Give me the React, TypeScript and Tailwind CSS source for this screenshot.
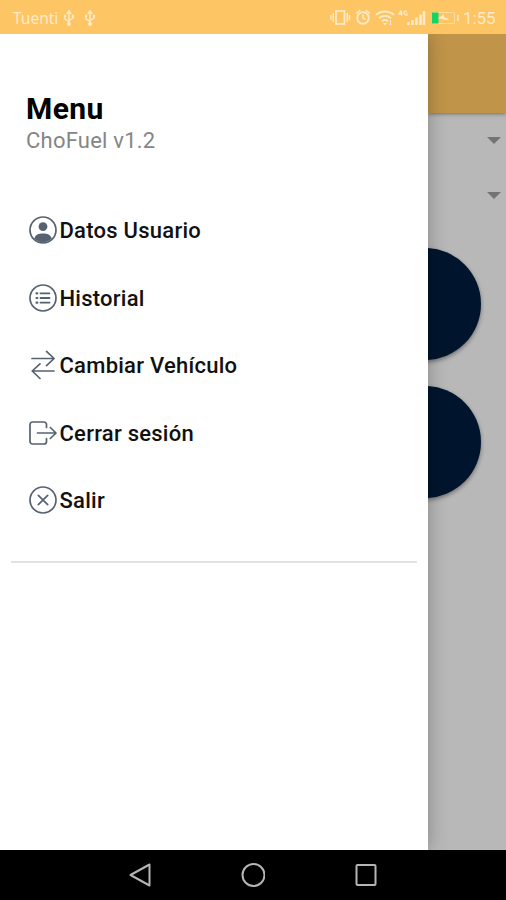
import type { ReactNode } from 'react'

const menuItems: { label: string; icon: ReactNode }[] = [
  {
    label: 'Datos Usuario',
    icon: (
      <>
        <circle cx="14" cy="14" r="13" />
        <circle cx="14" cy="10.6" r="4.4" fill="currentColor" stroke="none" />
        <path d="M5.3 22.6c1.2-3.9 4.2-5 8.7-5s7.5 1.1 8.7 5A12.3 12.3 0 0 1 5.3 22.6Z" fill="currentColor" stroke="none" />
      </>
    ),
  },
  {
    label: 'Historial',
    icon: (
      <>
        <circle cx="14" cy="14" r="13" />
        <path d="M11.5 9.3h9M11.5 14h9M11.5 18.7h9" strokeWidth="1.8" />
        <path d="M7.5 9.3h.8M7.5 14h.8M7.5 18.7h.8" strokeWidth="2.2" />
      </>
    ),
  },
  {
    label: 'Cambiar Vehículo',
    icon: <path d="M3 7.5h21.8M17.5.3l7.6 7.2-7.6 7.2M25 20H3.200M11 12.800 3.200 20l7.800 7.500" />,
  },
  {
    label: 'Cerrar sesión',
    icon: (
      <path d="M17.500 8.500v-3A2.500 2.500 0 0 0 15 3H3.500A2.500 2.500 0 0 0 1 5.500v17A2.500 2.500 0 0 0 3.500 25H15a2.500 2.500 0 0 0 2.500-2.500v-3M8.500 14H27M21.300 8.500 27 14l-5.700 5.500" />
    ),
  },
  {
    label: 'Salir',
    icon: (
      <>
        <circle cx="14" cy="14" r="13" />
        <path d="m9.300 9.300 9.400 9.400M18.700 9.300l-9.400 9.400" />
      </>
    ),
  },
]

function UsbIcon() {
  return (
    <svg viewBox="0 0 12 16" fill="none" stroke="currentColor" strokeWidth="1.4" className="h-4 w-3">
      <path d="M6 14V2M6 11.5 2 9V6M6 10.5 10 8V5.5" />
      <path d="M4.300 3.300 6 .6l1.700 2.700Z" fill="currentColor" />
      <circle cx="6" cy="14" r="1.200" fill="currentColor" />
      <path d="M1 5.800h2.200M8.800 5.800H11" strokeWidth="2.200" />
    </svg>
  )
}

function StatusBar() {
  return (
    <header className="flex h-[34px] items-center bg-[#fdc563] pl-[13px] pr-[10px] pt-0.5 text-[#ffeaca]">
      <span className="w-[50px] font-['Noto_Sans',sans-serif] text-[15.5px] leading-5">Tuenti</span>
      <UsbIcon />
      <span className="w-[9px]" />
      <UsbIcon />
      <div className="ml-auto flex items-center">
        <svg viewBox="0 0 130 20" fill="none" stroke="currentColor" className="h-5 w-[130px]">
          {/* vibrate */}
          <rect x="6" y="3" width="8.5" height="13" strokeWidth="1.7" />
          <path d="M3.300 5v9M17.300 5v9M1 7v5M19.500 7v5" strokeWidth="1.500" />
          {/* alarm */}
          <circle cx="33" cy="10" r="5.800" strokeWidth="1.900" />
          <path d="M33 6.500V10l2.500 1.500M26.300 5.500l4-3.500M39.700 5.500l-4-3.500" strokeWidth="1.500" />
          {/* wifi */}
          <path d="M46 6.800c5.400-4.400 12.600-4.400 18 0M49 10.200c3.600-3 8.400-3 12 0M52 13.200c2-1.500 4-1.500 6 0" strokeWidth="1.900" />
          <path d="M53 15h4l-2 2.500Z" fill="currentColor" stroke="none" />
          <path d="M60.500 12v5M59 15.500l1.500 1.500 1.500-1.500" strokeWidth="1" />
          {/* mobile network and signal */}
          <path d="M71 2.500 69 6h3.500M71.500 3v4.500M77 3.500c-3-2-4 3.500-1 3.500h1V5" strokeWidth="1.300" />
          <path d="M78.500 17v-3M82.500 17v-5M86.500 17V9.500M90.500 17V6.500M94 17V3" strokeWidth="2.600" />
          {/* battery */}
          <rect x="102.500" y="4.500" width="22" height="11" rx="1" strokeWidth="1" opacity=".6" />
          <rect x="102" y="4.500" width="6.500" height="11" fill="#12d565" stroke="none" />
          <path d="m108 10.500 6-4.500v3l5.500 2.500-6 .5v-1Z" fill="currentColor" stroke="none" />
          <path d="M128 7v6" strokeWidth="1.500" />
        </svg>
        <span className="ml-[3px] w-[33px] whitespace-nowrap text-[17px] leading-5 tracking-[-0.1px]">1:55</span>
      </div>
    </header>
  )
}

function Drawer() {
  return (
    <aside className="z-10 w-[428px] shrink-0 bg-white shadow-[0_0_18px_rgba(0,0,0,0.28)]">
      <div className="pl-[26px] pt-[57px]">
        <h1 className="text-[30px] font-bold leading-[35px] tracking-[0.4px] text-black">Menu</h1>
        <p className="text-[22px] leading-[30px] tracking-[0.22px] text-[#858585]">ChoFuel v1.2</p>
      </div>
      <nav className="mt-[41px] pl-[28.5px]">
        {menuItems.map((item) => (
          <a key={item.label} className="flex h-[67.5px] items-center gap-[3px]">
            <svg
              viewBox="0 0 28 28"
              fill="none"
              stroke="currentColor"
              strokeWidth="1.7"
              strokeLinecap="round"
              strokeLinejoin="round"
              className="-mt-px h-7 w-7 shrink-0 overflow-visible text-[#566270]"
            >
              {item.icon}
            </svg>
            <span className="text-[22px] font-medium tracking-[0.25px] text-[#111]">{item.label}</span>
          </a>
        ))}
      </nav>
      <div className="mx-[11px] mt-[26px] h-0.5 bg-[#e2e2e2]" />
    </aside>
  )
}

// Dimmed strip of the screen that stays visible next to the open drawer
function DimmedPage() {
  return (
    <main className="flex-1 overflow-hidden bg-[#b8b8b8]">
      <div className="h-[79px] bg-[#c0954a] shadow-[0_1px_4px_rgba(0,0,0,0.4)]" />
      {[0, 1].map((i) => (
        <div key={i} className="flex h-[55px] items-center justify-end pr-[5px]">
          <span className="border-x-[7px] border-t-[7px] border-x-transparent border-t-[#737373]" />
        </div>
      ))}
      <div className="-ml-[59px] mt-[25px] flex flex-col gap-[26px]">
        <div className="h-28 w-28 rounded-full bg-[#00152d] shadow-[0_2px_4px_rgba(0,0,0,0.4)]" />
        <div className="h-28 w-28 rounded-full bg-[#00152d] shadow-[0_2px_4px_rgba(0,0,0,0.4)]" />
      </div>
    </main>
  )
}

function NavigationBar() {
  return (
    <footer className="z-20 flex h-[50px] items-center justify-center bg-black text-[#b5b5b5]">
      <svg viewBox="0 0 24 24" fill="none" stroke="currentColor" strokeWidth="2" strokeLinejoin="round" className="h-6 w-6">
        <path d="M21.500 1.500v21L2.500 12Z" />
      </svg>
      <svg viewBox="0 0 24 24" fill="none" stroke="currentColor" strokeWidth="2" className="mx-[89px] h-6 w-6">
        <circle cx="12.500" cy="12" r="11" />
      </svg>
      <svg viewBox="0 0 24 24" fill="none" stroke="currentColor" strokeWidth="2" className="h-6 w-6">
        <rect x="2.500" y="2" width="19" height="20" rx="1" />
      </svg>
    </footer>
  )
}

export default function App() {
  return (
    <div className="flex h-[900px] w-[506px] flex-col overflow-hidden font-[Roboto,sans-serif]">
      <StatusBar />
      <div className="flex min-h-0 flex-1 overflow-hidden">
        <Drawer />
        <DimmedPage />
      </div>
      <NavigationBar />
    </div>
  )
}
